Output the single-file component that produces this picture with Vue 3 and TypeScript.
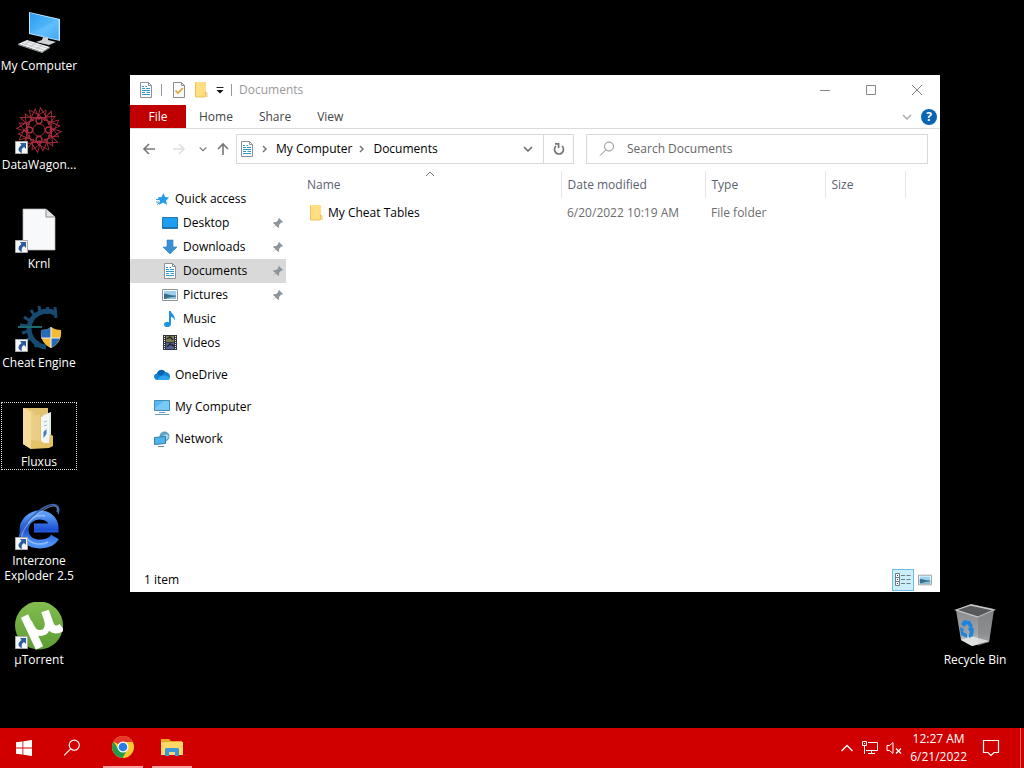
<script setup lang="ts">
import { ref } from 'vue'

interface DesktopItem {
  label: string
  icon: string
  shortcut?: boolean
  focused?: boolean
}
interface NavItem {
  label: string
  icon: string
  level: number
  pinned?: boolean
  current?: boolean
  spaced?: boolean
}
interface FileRow {
  name: string
  modified: string
  type: string
  size: string
}

const shortcuts: DesktopItem[] = [
  { label: 'My Computer', icon: 'computer' },
  { label: 'DataWagon...', icon: 'spiro', shortcut: true },
  { label: 'Krnl', icon: 'blank', shortcut: true },
  { label: 'Cheat Engine', icon: 'gear', shortcut: true },
  { label: 'Fluxus', icon: 'bigfolder', focused: true },
  { label: 'Interzone Exploder 2.5', icon: 'explorer', shortcut: true },
  { label: 'µTorrent', icon: 'torrent', shortcut: true },
]

const navItems: NavItem[] = [
  { label: 'Quick access', icon: 'star', level: 0 },
  { label: 'Desktop', icon: 'desktop', level: 1, pinned: true },
  { label: 'Downloads', icon: 'download', level: 1, pinned: true },
  { label: 'Documents', icon: 'doc', level: 1, pinned: true, current: true },
  { label: 'Pictures', icon: 'picture', level: 1, pinned: true },
  { label: 'Music', icon: 'music', level: 1 },
  { label: 'Videos', icon: 'video', level: 1 },
  { label: 'OneDrive', icon: 'cloud', level: 0, spaced: true },
  { label: 'My Computer', icon: 'monitor', level: 0, spaced: true },
  { label: 'Network', icon: 'network', level: 0, spaced: true },
]

const tabs = ['Home', 'Share', 'View']
const crumbs = ['My Computer', 'Documents']
const files: FileRow[] = [
  { name: 'My Cheat Tables', modified: '6/20/2022 10:19 AM', type: 'File folder', size: '' },
]
const spokes = Array.from({ length: 12 }, (_, i) => i * 30)
const query = ref('')
</script>

<template>
  <div class="screen">
    <svg class="sprite" width="0" height="0" aria-hidden="true">
      <defs>
        <linearGradient id="g-screen" x1="0" y1="0" x2="1" y2="1">
          <stop offset="0" stop-color="#2a9df0" /><stop offset="0.6" stop-color="#55b9fa" /><stop offset="1" stop-color="#2196ee" />
        </linearGradient>
        <linearGradient id="g-folder" x1="0" y1="0" x2="1" y2="0">
          <stop offset="0" stop-color="#f9e3a0" /><stop offset="1" stop-color="#e3bf6c" />
        </linearGradient>
        <linearGradient id="g-green" x1="0" y1="0" x2="0" y2="1">
          <stop offset="0" stop-color="#83bd50" /><stop offset="1" stop-color="#5d9b34" />
        </linearGradient>
        <linearGradient id="g-ie" x1="0" y1="0" x2="0" y2="1">
          <stop offset="0" stop-color="#5c9cf7" /><stop offset="0.5" stop-color="#1c50d4" /><stop offset="1" stop-color="#4f92f5" />
        </linearGradient>
        <linearGradient id="g-bin" x1="0" y1="0" x2="0" y2="1">
          <stop offset="0" stop-color="#85878a" /><stop offset="0.7" stop-color="#a0a2a4" /><stop offset="1" stop-color="#d5d7d8" />
        </linearGradient>
      </defs>

      <symbol id="computer" viewBox="0 0 48 48">
        <path d="M14 4l31 7v22l-31-7z" fill="#bfe5ff" />
        <path d="M15 5l28.500 6.800v20l-28.500-6.600z" fill="url(#g-screen)" />
        <path d="M15 25L43.500 12v20l-28.500-6.600z" fill="#7cc9fb" opacity=".35" />
        <path d="M28 29l5 1 0 2 8 2-7 3-13-3 6-2z" fill="#cdd3d7" />
        <path d="M12 32l23 7-8 5-24-8z" fill="#f2f2f2" />
        <path d="M3 36l24 8 8-5v1l-8 5-24-8z" fill="#9da3a7" />
        <path d="M10 33.500l22 6.500M7 35l22 7M15 33l-7 5M21 35l-7 5M27 37l-7 5" stroke="#b9bec2" stroke-width=".8" fill="none" />
      </symbol>

      <symbol id="spiro" viewBox="0 0 48 48">
        <g fill="none" stroke="#c8364a" stroke-width=".9" opacity=".85">
          <g v-for="a in spokes" :key="a" :transform="`rotate(${a} 24 23)`">
            <path d="M24 8L14 3l3 11M24 8l7-5-1 11M17 14l7-6 6 6" />
          </g>
          <circle cx="24" cy="23" r="6" /><circle cx="24" cy="23" r="13" stroke-width=".7" />
          <g stroke-width="1.300">
            <circle cx="24" cy="13.500" r="3" /><circle cx="24" cy="32.500" r="3" /><circle cx="14.500" cy="23" r="3" /><circle cx="33.500" cy="23" r="3" />
          </g>
        </g>
      </symbol>

      <symbol id="blank" viewBox="0 0 48 48">
        <path d="M8 3h23l9 8v33H8z" fill="#f8f9fa" stroke="#b5b5b5" stroke-width=".7" />
        <path d="M31 3v8h9" fill="#e2e3e4" stroke="#8e8e8e" />
      </symbol>

      <symbol id="gear" viewBox="0 0 48 48">
        <path d="M41 9C31 2 15 9 14 23c0 11 8 18 17 19" fill="none" stroke="#174a70" stroke-width="5" />
        <path d="M40 2l1 11M33 2l-1 7M24 1l1 7M16 5l4 6M9 12l6 4M5 20l8 1M7 28l7-2M11 36l6-5M20 42l3-6" stroke="#174a70" stroke-width="3" fill="none" />
        <path d="M3 22h24" stroke="#1b6a70" stroke-width="2" />
        <path d="M26 25c4 0 8-1 10-3 3 2 6 3 10 3 1 9-3 15-10 18-7-3-11-9-10-18z" fill="#f5ba35" />
        <path d="M36 22c-2 2-6 3-10 3-.2 3 .2 5 1 8h9zM36 33h9c-2 5-5 8-9 10z" fill="#256bb8" />
        <path d="M36 22v21M26 33h19" stroke="#e8edef" stroke-width="1.200" />
      </symbol>

      <symbol id="bigfolder" viewBox="0 0 48 48">
        <path d="M8 4h25v35H16z" fill="#e3c173" />
        <path d="M28 11l8-3v34l-8 1z" fill="#dff0e2" />
        <path d="M26 13l8-3v33l-8-1z" fill="#f3f5f7" />
        <path d="M29 18l3-1M29 22l3-1" stroke="#8fc3cf" />
        <path d="M28.500 28l3-3v5l-3 4z" fill="#3f7fc0" />
        <path d="M8 4l15 5v33l-7 3-8-5z" fill="url(#g-folder)" />
        <path d="M16 12l9-2v28l-9 7z" fill="#ecd08a" opacity=".7" />
        <path d="M16 45V36l10 1 3 2h5l1-9 3 2v10l-4 2z" fill="#e5c168" />
        <path d="M8 4l8 5v36l-8-5z" fill="#f5dc9a" />
      </symbol>

      <symbol id="explorer" viewBox="0 0 48 48">
        <path d="M40 34c-3 5-8 7-15 7-10 0-16-6-16-14s7-15 16-15 14 6 14 13H19" fill="none" stroke="url(#g-ie)" stroke-width="9" />
        <path d="M13 20c4-6 9-9 17-7M12 35c4 6 14 8 21 4" stroke="#a9cdfd" stroke-width="1.500" fill="none" opacity=".7" />
        <path d="M6 44C-1 35 12 14 30 4c9-5 16-2 13 7" fill="none" stroke="#3a66b8" stroke-width="1.500" />
        <path d="M6 38C6 26 19 12 32 5c7-4 12-2 10 4" fill="none" stroke="#9bbcf2" stroke-width=".8" />
      </symbol>

      <symbol id="torrent" viewBox="0 0 48 48">
        <circle cx="24" cy="23.500" r="24" fill="url(#g-green)" />
        <path d="M9.500 14l15 32" stroke="#fff" stroke-width="8" fill="none" />
        <path d="M14 20c4 9 6 11 11 11 7 0 9-6 7-15" stroke="#fff" stroke-width="6" fill="none" />
        <path d="M30 9l5 14c2 5 7 6 12 2" stroke="#fff" stroke-width="8" fill="none" />
      </symbol>

      <symbol id="bin" viewBox="0 0 48 48">
        <path d="M5 8L20 2l23 5-5 33-17 4-11-6z" fill="url(#g-bin)" />
        <path d="M5 8l15-5 23 5-16 7z" fill="#56585a" stroke="#c7c9ca" stroke-width="1.300" />
        <path d="M27 15v29l11-4 5-32z" fill="#777a7c" opacity=".5" />
        <path d="M10 38l10-4 18 5-17 5z" fill="#e6e8e8" opacity=".8" />
        <path d="M10 22l3-4 6 1 3 5-3 2-3-4-3 3zM20 24l3 3-1 7-4 2v-4l1-2-2-3zM9 25l4 2-1 3 4 2v4l-6-3z" fill="#1b86dc" />
      </symbol>

      <symbol id="arrow" viewBox="0 0 13 13">
        <path d="M.5.5h12v12H.5z" fill="#f6f6f6" stroke="#aaa" />
        <path d="M5 2h6v6L9 6c-2 1-3 3-2 6-4-1-5-5-.5-8z" fill="#2b5c9e" />
      </symbol>

      <symbol id="doc" viewBox="0 0 16 16">
        <path d="M2.500.5h8l3 3v12h-11z" fill="#fff" stroke="#8b9196" />
        <path d="M10.500.5v3h3" fill="none" stroke="#8b9196" />
        <path d="M4 4.500h2M7.500 4.500H9M4 6.500h3M8 6.500h4M4 8.500h8M4 10.500h3M8.500 10.500H12M4 12.500h8" stroke="#2f96c8" />
      </symbol>
      <symbol id="check" viewBox="0 0 16 16">
        <path d="M2.500.5h8l3 3v12h-11z" fill="#fafafa" stroke="#8d8d8d" />
        <path d="M10.500.5v3h3" fill="none" stroke="#8d8d8d" />
        <path d="M4.500 8.500l2.500 2.500 5-5" fill="none" stroke="#d9a33f" stroke-width="1.700" />
      </symbol>
      <symbol id="folder" viewBox="0 0 16 16">
        <path d="M2 0h11v15H2z" fill="#ffdf82" />
        <path d="M2.500.5v14.500H12M12.500 15v-5l1.500 1v4" fill="none" stroke="#edc258" />
      </symbol>
      <symbol id="star" viewBox="0 0 16 16">
        <path d="M9.500 2l1.500 4 4 .5-3 3.200 1 4.300-4-2.500L5 14l1-4-2.500-3.500 4-.5z" fill="#239bea" />
        <path d="M2 8.500h4M2 11h3M3 13.500l3-2" stroke="#3b98d6" />
      </symbol>
      <symbol id="desktop" viewBox="0 0 16 16">
        <path d="M.5 2.500h15v11H.5z" fill="#1c9ff1" stroke="#2877ad" /><path d="M1 12.500h14" stroke="#1b6fb0" />
      </symbol>
      <symbol id="download" viewBox="0 0 16 16">
        <path d="M5 1h6v7h4l-7 7-7-7h4z" fill="#3a8fd2" stroke="#2b7dbf" stroke-width=".6" />
      </symbol>
      <symbol id="picture" viewBox="0 0 16 16">
        <path d="M.5 2.500h15v11H.5z" fill="#fff" stroke="#8d9499" />
        <path d="M2 4h12v8H2z" fill="#9bd0f1" /><path d="M2 7c3-1 6 2 12 1.500V12H2z" fill="#3b6c8c" /><path d="M7 10.500l7-1V12H3z" fill="#8fc3d6" />
      </symbol>
      <symbol id="music" viewBox="0 0 16 16">
        <path d="M7 0h1.800c.5 3 5 4 3.700 9.500-.5-2.500-1.700-3.300-3.500-3.800v7c0 4.500-7 4.300-7 .8 0-2.500 3-3.500 5-2.300z" fill="#1e91df" />
      </symbol>
      <symbol id="video" viewBox="0 0 16 16">
        <path d="M1 0h14v15H1z" fill="#34323d" />
        <path d="M4 1h8v6H4z" fill="#7b7f4d" /><path d="M4 8h8v6H4z" fill="#536396" /><path d="M5 4l3-2 3 3M5 12l3-3 4 2" stroke="#242735" fill="none" stroke-width="1.500" />
        <path d="M2.500 1v14M13.500 1v14" stroke="#eee" stroke-dasharray="1 1" />
      </symbol>
      <symbol id="cloud" viewBox="0 0 16 16">
        <path d="M3 13c-4-1-4-6 0-6.500C4 2.500 9 1.500 11 5c3-.3 5 2 5 4.500S15 13 13 13z" fill="#1381d3" />
        <path d="M3 7c1-5 7-5 8-2L7 9z" fill="#0763ae" /><path d="M3 13c2-4 7-6 12-3 1 1 1 3-2 3z" fill="#2da6ec" />
      </symbol>
      <symbol id="monitor" viewBox="0 0 16 16">
        <path d="M.5 1.500h15v10H.5z" fill="#57baf3" stroke="#458cb5" /><path d="M1 9l9-7h5v9H1z" fill="#85d0fa" opacity=".7" />
        <path d="M5 13.500h6M1 15.500h14" stroke="#6a9eb9" />
      </symbol>
      <symbol id="network" viewBox="0 0 16 16">
        <circle cx="10.500" cy="5.500" r="5" fill="#5d9fc3" /><path d="M8 2l2 2 3-1 2 3-3 3-2-4z" fill="#a8d7e6" />
        <path d="M.5 6.500l11-1v7l-11 1z" fill="#4fb4ee" stroke="#357fa8" /><path d="M4 15.500h6" stroke="#5c8da7" />
      </symbol>
      <symbol id="pin" viewBox="0 0 12 12">
        <path d="M7 1l4 4-1 .8-.8-.2L7 8l.2 2-1 1L4 8.500 1 11l2.500-3L1 6l1-1 2 .2L6.400 3l-.2-1z" fill="#8c959b" />
      </symbol>
      <symbol id="lens" viewBox="0 0 16 16">
        <circle cx="10" cy="5.500" r="4.500" fill="none" stroke="currentColor" /><path d="M6.800 8.800L1 14.600" stroke="currentColor" fill="none" />
      </symbol>
      <symbol id="chevron" viewBox="0 0 12 12">
        <path d="M2 4l4 4 4-4" fill="none" stroke="currentColor" stroke-width="1.500" />
      </symbol>
    </svg>

    <main class="desktop">
      <div class="shortcuts">
        <button v-for="s in shortcuts" :key="s.label" class="shortcut" :class="{ focused: s.focused }">
          <span class="art">
            <svg class="big"><use :href="'#' + s.icon" /></svg>
            <svg v-if="s.shortcut" class="overlay"><use href="#arrow" /></svg>
          </span>
          <span>{{ s.label }}</span>
        </button>
      </div>

      <button class="shortcut bin">
        <span class="art"><svg class="big"><use href="#bin" /></svg></span>
        <span class="nowrap">Recycle Bin</span>
      </button>

      <section class="window" aria-label="Documents">
        <header class="titlebar">
          <svg class="ico"><use href="#doc" /></svg>
          <i class="sep"></i>
          <button class="quick" aria-label="Properties"><svg class="ico"><use href="#check" /></svg></button>
          <button class="quick" aria-label="New folder"><svg class="ico"><use href="#folder" /></svg></button>
          <button class="quick" aria-label="Customize toolbar">
            <svg width="10" height="10" viewBox="0 0 10 10"><path d="M1.500 2.500h7" stroke="#222" /><path d="M1.500 5h7L5 8.500z" fill="#111" /></svg>
          </button>
          <i class="sep"></i>
          <h1>Documents</h1>
          <div class="controls">
            <button aria-label="Minimize"><svg width="12" height="12"><path d="M1 6.500h10" stroke="#888" /></svg></button>
            <button aria-label="Maximize"><svg width="12" height="12"><path d="M1.500 1.500h9v9h-9z" fill="none" stroke="#888" /></svg></button>
            <button aria-label="Close"><svg width="12" height="12"><path d="M1 1l10 10M11 1L1 11" stroke="#888" /></svg></button>
          </div>
        </header>

        <nav class="ribbon" aria-label="Ribbon">
          <button class="file">File</button>
          <button v-for="t in tabs" :key="t">{{ t }}</button>
          <div class="ribbon-end">
            <button class="expand" aria-label="Expand the ribbon"><svg width="12" height="12"><use href="#chevron" /></svg></button>
            <button class="help" aria-label="Help">?</button>
          </div>
        </nav>

        <div class="toolbar">
          <div class="history">
            <button aria-label="Back"><svg width="14" height="14" viewBox="0 0 14 14"><path d="M13 7H2M7 2L2 7l5 5" fill="none" stroke="#777" stroke-width="1.600" /></svg></button>
            <button aria-label="Forward"><svg width="14" height="14" viewBox="0 0 14 14"><path d="M1 7h11M7 2l5 5-5 5" fill="none" stroke="#dedede" stroke-width="1.500" /></svg></button>
            <button class="recent" aria-label="Recent locations"><svg width="10" height="10"><use href="#chevron" /></svg></button>
            <button class="up" aria-label="Up"><svg width="14" height="14" viewBox="0 0 14 14"><path d="M7 13V2M2 7l5-5 5 5" fill="none" stroke="#777" stroke-width="1.600" /></svg></button>
          </div>
          <div class="address">
            <svg class="ico"><use href="#doc" /></svg>
            <template v-for="c in crumbs" :key="c">
              <svg class="crumb-arrow" width="8" height="10" viewBox="0 0 8 10"><path d="M2 2l3 3-3 3" fill="none" stroke="#777" stroke-width="1.500" /></svg>
              <button class="crumb">{{ c }}</button>
            </template>
            <button class="drop" aria-label="Previous locations"><svg width="12" height="12"><use href="#chevron" /></svg></button>
            <button class="refresh" aria-label="Refresh">
              <svg width="12" height="14" viewBox="0 0 12 14"><path d="M9 4c3 3 1 8-3 8s-6-5-3-8M2 1.800h3.600V6" fill="none" stroke="#777" stroke-width="1.700" /></svg>
            </button>
          </div>
          <label class="search">
            <svg class="ico"><use href="#lens" /></svg>
            <input v-model="query" type="search" placeholder="Search Documents" aria-label="Search Documents" />
          </label>
        </div>

        <div class="content">
          <nav class="tree" aria-label="Folders">
            <a v-for="(n, i) in navItems" :key="i" href="#" :class="{ child: n.level, current: n.current, spaced: n.spaced }">
              <svg class="ico"><use :href="'#' + n.icon" /></svg>
              <span>{{ n.label }}</span>
              <svg v-if="n.pinned" class="pin"><use href="#pin" /></svg>
            </a>
          </nav>
          <div class="files">
            <table>
              <colgroup><col class="c-name" /><col class="c-date" /><col class="c-type" /><col class="c-size" /></colgroup>
              <thead>
                <tr>
                  <th scope="col" aria-sort="ascending">
                    Name
                    <svg class="sort" width="10" height="6" viewBox="0 0 10 6"><path d="M1 5l4-4 4 4" fill="none" stroke="#777" /></svg>
                  </th>
                  <th scope="col">Date modified</th><th scope="col">Type</th><th scope="col">Size</th>
                </tr>
              </thead>
              <tbody>
                <tr v-for="f in files" :key="f.name">
                  <td><div class="name"><svg class="ico"><use href="#folder" /></svg>{{ f.name }}</div></td>
                  <td>{{ f.modified }}</td><td>{{ f.type }}</td><td>{{ f.size }}</td>
                </tr>
              </tbody>
            </table>
          </div>
        </div>

        <footer class="status">
          <span>1 item</span>
          <div class="views">
            <button class="on" aria-label="Details view">
              <svg width="16" height="16" viewBox="0 0 16 16"><path d="M.5 1.500h4v4h-4zM.5 5.500h4v4h-4zM.5 9.500h4v4h-4z" fill="#fff" stroke="#6b7d86" /><path d="M2 3.500h1M2 7.500h1M2 11.500h1" stroke="#333" /><path d="M6 3.500h4M11.500 3.500h4M6 7.500h4M11.500 7.500h4M6 11.500h4M11.500 11.500h4" stroke="#6b7d86" /></svg>
            </button>
            <button aria-label="Large icons view"><svg width="14" height="14"><use href="#picture" /></svg></button>
          </div>
        </footer>
      </section>
    </main>

    <footer class="taskbar">
      <button aria-label="Start"><svg width="16" height="16" viewBox="0 0 16 16"><path d="M0 2.300l6.500-.9v6.100H0zM7.300 1.300L16 0v7.500H7.300zM0 8.400h6.500v6.200L0 13.700zM7.300 8.400H16V16l-8.700-1.300z" fill="#fff" /></svg></button>
      <button aria-label="Search"><svg class="task-lens" viewBox="0 0 16 16"><use href="#lens" /></svg></button>
      <button class="running" aria-label="Chrome">
        <svg width="22" height="22" viewBox="0 0 22 22">
          <circle cx="11" cy="11" r="11" fill="#fbc82e" />
          <path d="M11 11L1.500 5.500A11 11 0 0 1 20.500 5.500L20.600 6H11z" fill="#e5372c" />
          <path d="M1.500 5.500A11 11 0 0 0 10.500 22L15.300 13.500 11 11 6.500 13.500z" fill="#25994a" />
          <circle cx="11" cy="11" r="5.500" fill="#fff" /><circle cx="11" cy="11" r="4.300" fill="#2a7be4" />
        </svg>
      </button>
      <button class="running" aria-label="File Explorer">
        <svg width="22" height="18" viewBox="0 0 22 18">
          <path d="M0 1h8l2 2h11v14H0z" fill="#e9aa28" /><path d="M0 4h22v13H0z" fill="#ffd768" />
          <path d="M4 18v-7l1-1h12l1 1v7h-4v-4H8v4z" fill="#3c97d4" /><path d="M8 14h6v3H8z" fill="#f1d57b" />
        </svg>
      </button>
      <div class="tray">
        <button aria-label="Show hidden icons"><svg width="14" height="10" viewBox="0 0 14 10"><path d="M1.500 8L7 2.500 12.500 8" fill="none" stroke="#fff" stroke-width="1.300" /></svg></button>
        <button aria-label="Network"><svg width="16" height="14" viewBox="0 0 16 14"><path d="M6 1.500h9.500v8H4M9.500 9.500v3M6 12.500h7M2.500 5v8" fill="none" stroke="#fff" /><path d="M.5.500h4v4h-4zM2 2.500h1" fill="none" stroke="#fff" /></svg></button>
        <button aria-label="Volume muted"><svg width="16" height="14" viewBox="0 0 16 14"><path d="M1 4.500h2.500l3.500-3v11l-3.500-3H1z" fill="none" stroke="#fff" /><path d="M10 7.500l5 5M15 7.500l-5 5" stroke="#fff" stroke-width="1.400" /></svg></button>
        <time datetime="2022-06-21T00:27">12:27 AM<br />6/21/2022</time>
        <button class="notify" aria-label="Notifications"><svg width="18" height="18" viewBox="0 0 18 18"><path d="M1.500 1.500h15v12H12L9 16.500 6 13.500H1.500z" fill="none" stroke="#fff" stroke-width="1.200" /></svg></button>
      </div>
    </footer>
  </div>
</template>

<style>
html,
body {
  margin: 0;
  background: #000;
}
</style>

<style scoped>
.screen {
  display: flex;
  flex-direction: column;
  height: 100vh;
  overflow: hidden;
  background: #000;
  font: 12px/16px 'Open Sans', 'Noto Sans', sans-serif;
  color: #000;
}
.screen * {
  box-sizing: border-box;
}
.sprite {
  position: absolute;
}
svg {
  flex: none;
  display: block;
}
button {
  margin: 0;
  padding: 0;
  border: 0;
  background: none;
  font: inherit;
  color: inherit;
  display: flex;
  align-items: center;
  justify-content: center;
}
.ico {
  width: 16px;
  height: 16px;
}
.desktop {
  position: relative;
  flex: 1;
  min-height: 0;
}
.shortcuts {
  display: grid;
  width: 76px;
  grid-auto-rows: 99px;
  align-items: start;
  padding-top: 6px;
  margin-left: 1px;
}
.shortcut {
  width: 76px;
  flex-direction: column;
  gap: 2px;
  padding: 1px 0 0;
  border: 1px solid transparent;
  color: #fff;
  line-height: 15px;
  text-align: center;
}
.shortcut.focused {
  border: 1px dotted #ddd;
}
.shortcut > span:last-child {
  margin: 0 -4px;
}
.nowrap {
  white-space: nowrap;
}
.art {
  position: relative;
}
.big {
  width: 48px;
  height: 48px;
}
.overlay {
  position: absolute;
  left: 0;
  bottom: 1px;
  width: 13px;
  height: 13px;
}
.bin {
  position: absolute;
  right: 11px;
  bottom: 60px;
}
.window {
  position: absolute;
  left: 130px;
  right: 84px;
  top: 75px;
  bottom: 136px;
  display: flex;
  flex-direction: column;
  background: #fff;
}
.titlebar {
  display: flex;
  align-items: center;
  height: 30px;
  padding-left: 8px;
}
.sep {
  width: 1px;
  height: 12px;
  background: #999;
  margin: 0 7px;
}
.sep + .quick {
  margin-left: 2px;
}
.quick {
  height: 22px;
  margin-right: 6px;
}
.quick + .sep {
  margin-left: 0;
}
h1 {
  margin: 0;
  font: inherit;
  color: #999;
}
.controls {
  display: flex;
  margin-left: auto;
  height: 100%;
}
.controls button {
  width: 46px;
}
.ribbon {
  display: flex;
  height: 24px;
  border-bottom: 1px solid #dadbdc;
  color: #444;
}
.ribbon > button {
  padding: 0 13px;
}
.ribbon > .file {
  width: 56px;
  background: #c00000;
  color: #fff;
}
.ribbon-end {
  display: flex;
  align-items: center;
  gap: 8px;
  margin-left: auto;
  padding-right: 3px;
}
.expand {
  color: #aaa;
}
.help {
  width: 16px;
  height: 16px;
  border-radius: 50%;
  background: #0a64b4;
  color: #fff;
  font-weight: 700;
}
.toolbar {
  display: grid;
  grid-template-columns: 94px minmax(0, 350fr) minmax(0, 342fr);
  height: 40px;
  padding: 5px 12px;
}
.history {
  display: flex;
  align-items: center;
  color: #777;
}
.history button + button {
  margin-left: 16px;
}
.history button + .recent {
  margin-left: 12px;
}
.history .recent + .up {
  margin-left: 8px;
}
.address {
  display: flex;
  align-items: center;
  margin-right: 12px;
  border: 1px solid #d9d9d9;
  padding-left: 2px;
}
.crumb-arrow {
  margin: 0 7px 0 6px;
}
.drop {
  width: 30px;
  height: 100%;
  margin-left: auto;
  color: #666;
}
.refresh {
  width: 30px;
  height: 100%;
  border-left: 1px solid #d9d9d9;
}
.search {
  display: flex;
  align-items: center;
  padding-left: 12px;
  gap: 12px;
  border: 1px solid #d9d9d9;
  color: #888;
}
.search input {
  flex: 1;
  min-width: 0;
  padding: 0;
  border: 0;
  outline: 0;
  background: none;
  font: inherit;
  color: #000;
}
.search input::placeholder {
  color: #666;
  opacity: 1;
}
.content {
  display: flex;
  flex: 1;
  min-height: 0;
}
.tree {
  width: 156px;
  padding-top: 18px;
}
.tree a {
  display: flex;
  align-items: center;
  gap: 5px;
  height: 24px;
  padding: 0 2px 0 24px;
  color: #000;
  text-decoration: none;
}
.tree a.child {
  padding-left: 32px;
}
.tree a.current {
  background: #d9d9d9;
}
.tree a.spaced {
  margin-top: 8px;
}
.pin {
  width: 12px;
  height: 12px;
  margin-left: auto;
}
.files {
  flex: 1;
  padding: 2px 0 0 14px;
}
table {
  border-collapse: collapse;
  table-layout: fixed;
  width: 605px;
  color: #6d6d6d;
}
.c-name {
  width: 261px;
}
.c-date {
  width: 144px;
}
.c-type {
  width: 120px;
}
.c-size {
  width: 80px;
}
th {
  position: relative;
  height: 27px;
  padding: 0 0 0 6px;
  border-right: 1px solid #e5e5e5;
  font-weight: 400;
  text-align: left;
  color: #5a6270;
}
th:first-child {
  padding-left: 7px;
}
.sort {
  position: absolute;
  top: 0;
  left: 48%;
}
td {
  height: 30px;
  padding: 0 0 0 6px;
}
.name {
  display: flex;
  align-items: center;
  gap: 4px;
  padding-left: 2px;
  color: #000;
}
.status {
  display: flex;
  align-items: center;
  height: 24px;
  padding: 0 8px 0 14px;
}
.views {
  display: flex;
  gap: 4px;
  margin-left: auto;
}
.views button {
  min-width: 14px;
  height: 22px;
}
.views .on {
  width: 22px;
  border: 1px solid #6cc0dc;
  background: #cceefa;
}
.taskbar {
  display: flex;
  height: 40px;
  background: #d00000;
  color: #fff;
}
.taskbar > button {
  width: 48px;
}
.taskbar > .running {
  width: 40px;
  margin-left: 7px;
  border-bottom: 2px solid #ff9d9d;
}
.taskbar > .running + .running {
  margin-left: 9px;
}
.task-lens {
  width: 18px;
  height: 18px;
}
.tray {
  display: flex;
  align-items: center;
  gap: 8px;
  margin-left: auto;
  padding-right: 3px;
  border-right: 1px solid #e66;
  margin-right: 3px;
}
time {
  line-height: 18px;
  text-align: center;
  margin-right: 7px;
}
.notify {
  margin-right: 17px;
}
</style>
